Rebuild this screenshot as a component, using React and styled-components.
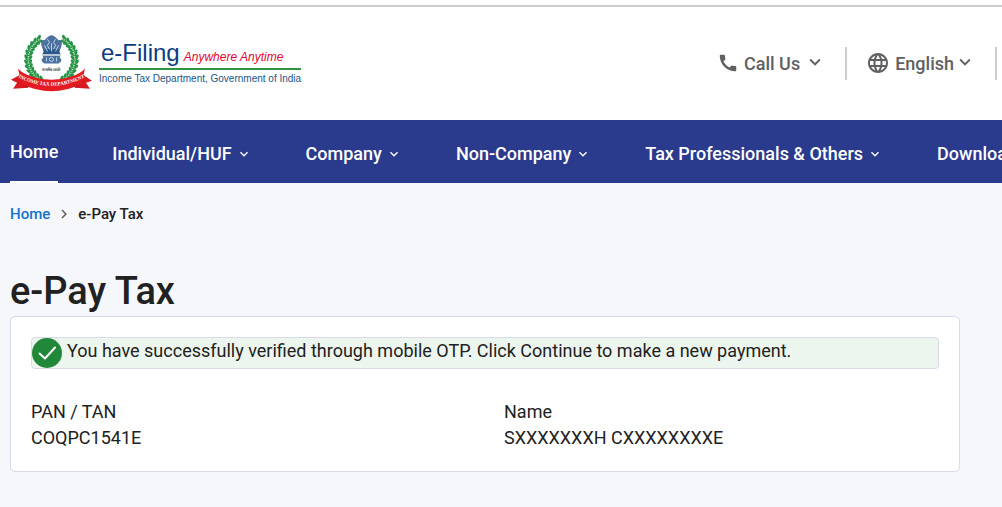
import React from "react";
import styled, { createGlobalStyle } from "styled-components";
import {
  MdCall,
  MdKeyboardArrowDown,
  MdKeyboardArrowRight,
  MdLanguage,
} from "react-icons/md";

const menus = [
  "Individual/HUF",
  "Company",
  "Non-Company",
  "Tax Professionals & Others",
  "Downloads",
];

const leafAngles = [-62, -51, -40, -29, -18, -7, 4, 15, 26, 37, 48, 59];

function Leaves() {
  return leafAngles.map((angle) => (
    <g key={angle} transform={`rotate(${angle} 0 0) translate(23 0)`}>
      <ellipse cx="2" cy="0" rx="1.6" ry="3.4" transform="rotate(36)" />
      <ellipse cx="-2" cy="0" rx="1.5" ry="3.2" transform="rotate(-36)" />
      <circle cx="0" cy="2" r="1" fill="#8cc79a" />
    </g>
  ));
}

function Emblem() {
  return (
    <EmblemSvg viewBox="0 0 82 57" aria-hidden="true">
      <g fill="#269447">
        <g transform="translate(41 25)">
          <Leaves />
        </g>
        <g transform="translate(41 25) scale(-1 1)">
          <Leaves />
        </g>
      </g>

      {/* lion capital */}
      <g fill="#4a719f">
        <path d="M37 3 Q41 -1 45 3 L48 6 Q52 5 51 11 L49 17 H33 L31 11 Q30 5 34 6 Z" />
        <path d="M34 15 H48 L50 20 H32 Z" fill="#2d568b" />
        <path d="M32 21 H50 L49 23 Q53 26 48 29 H34 Q29 26 33 23 Z" />
      </g>
      <g fill="none" stroke="#dbe6f1" strokeWidth="0.8">
        <path d="M37 5 L39 8 L37 11 L39 15 M45 5 L43 8 L45 11 L43 15 M41 9 V17" />
        <path d="M33 20.5 H49 M34 11 L37 17 M48 11 L45 17" />
        <circle cx="41" cy="25" r="2" />
        <path d="M36 23 V27 M46 23 V27" />
      </g>
      <text
        x="41"
        y="36"
        textAnchor="middle"
        fontSize="4"
        fontWeight="700"
        fill="#333"
      >
        सत्यमेव जयते
      </text>

      {/* ribbon */}
      <path
        d="M10 40 L1 45 L7 48 L3 54 L18 53 Z M72 40 L81 46 L75 48 L79 54 L64 53 Z"
        fill="#d71920"
      />
      <path d="M11 48 L18 53 V49 Z M71 48 L64 53 V49 Z" fill="#841015" />
      <path
        d="M8 34 Q12 39 22 42 Q41 48 60 42 Q70 39 74 34 L71 49 Q41 64 11 49 Z"
        fill="#e31b23"
      />
      <path id="ribbonLine" d="M5 41 Q41 61 77 41" fill="none" />
      <text
        fontFamily="Liberation Serif, serif"
        fontSize="5"
        fontWeight="700"
        fill="#fff"
        textAnchor="middle"
      >
        <textPath href="#ribbonLine" startOffset="50%">
          INCOME TAX DEPARTMENT
        </textPath>
      </text>
    </EmblemSvg>
  );
}

function App() {
  return (
    <>
      <GlobalStyle />
      <Header>
        <Brand href="#home">
          <Emblem />
          <BrandText>
            <BrandTop>
              <BrandName>e-Filing</BrandName>
              <Tagline>Anywhere Anytime</Tagline>
            </BrandTop>
            <Department>Income Tax Department, Government of India</Department>
          </BrandText>
        </Brand>
        <Tools>
          <ToolButton type="button">
            <MdCall size={22} />
            Call Us
            <ToolArrow $space="-1px" />
          </ToolButton>
          <Divider />
          <ToolButton type="button">
            <MdLanguage size={24} />
            <span>English</span>
            <ToolArrow $space="-5px" />
          </ToolButton>
          <Divider />
        </Tools>
      </Header>

      <Nav>
        <HomeLink href="#home">Home</HomeLink>
        {menus.map((menu) => (
          <MenuButton type="button" key={menu}>
            {menu}
            <MdKeyboardArrowDown size={16} />
          </MenuButton>
        ))}
      </Nav>

      <Main>
        <Breadcrumb aria-label="Breadcrumb">
          <a href="#home">Home</a>
          <MdKeyboardArrowRight size={18} />
          <span>e-Pay Tax</span>
        </Breadcrumb>

        <Title>e-Pay Tax</Title>

        <Card>
          <Alert role="status">
            <CheckIcon viewBox="0 0 30 30" aria-hidden="true">
              <circle cx="15" cy="15" r="15" fill="#218739" />
              <path
                d="M7.5 15.5 L13 20.5 L23 9.5"
                fill="none"
                stroke="#fff"
                strokeWidth="2"
                strokeLinecap="round"
                strokeLinejoin="round"
              />
            </CheckIcon>
            <AlertText>
              You have successfully verified through mobile OTP. Click Continue
              to make a new payment.
            </AlertText>
          </Alert>

          <Details>
            <div>
              <dt>PAN / TAN</dt>
              <dd>COQPC1541E</dd>
            </div>
            <div>
              <dt>Name</dt>
              <dd>SXXXXXXXH CXXXXXXXXE</dd>
            </div>
          </Details>
        </Card>
      </Main>
    </>
  );
}

const GlobalStyle = createGlobalStyle`
  * {
    box-sizing: border-box;
  }

  body {
    margin: 0;
    background: #f5f7fb;
    color: #212121;
    font-family: Roboto, "Liberation Sans", sans-serif;
    font-size: 18px;
    overflow-x: hidden;
  }

  a {
    text-decoration: none;
  }

  button {
    border: 0;
    padding: 0;
    background: none;
    font: inherit;
    cursor: pointer;
  }

  svg {
    flex-shrink: 0;
  }
`;

const Header = styled.header`
  display: flex;
  justify-content: space-between;
  align-items: center;
  background: linear-gradient(#ccc, #ccc) 0 5px / 100% 2px no-repeat #fff;
  padding: 6px 5px 0 10px;
  height: 120px;
`;

const Brand = styled.a`
  display: flex;
  align-items: center;
  gap: 6px;
`;

const EmblemSvg = styled.svg`
  width: 83px;
  height: 58px;
`;

const BrandText = styled.div`
  font-family: "Liberation Sans", sans-serif;
  white-space: nowrap;
`;

const BrandTop = styled.div`
  display: flex;
  align-items: baseline;
  gap: 4px;
  padding: 0 2px;
  border-bottom: 2px solid #2c9440;
`;

const BrandName = styled.span`
  font-size: 24px;
  line-height: 30px;
  color: #0b3d84;
`;

const Tagline = styled.span`
  font-size: 12px;
  font-style: italic;
  color: #e2062c;
`;

const Department = styled.div`
  font-size: 10px;
  line-height: 18px;
  color: #1c5486;
`;

const Tools = styled.div`
  display: flex;
  align-items: center;
  gap: 19px;
`;

const ToolButton = styled.button`
  display: flex;
  align-items: center;
  gap: 5px;
  color: #616161;
  font-weight: 500;
`;

const ToolArrow = styled(MdKeyboardArrowDown).attrs({ size: 22 })`
  margin-left: ${(props) => props.$space};
  margin-bottom: 2px;
`;

const Divider = styled.span`
  width: 2px;
  height: 33px;
  background: #ccc;
`;

const Nav = styled.nav`
  display: flex;
  gap: 54px;
  height: 63px;
  padding-left: 10px;
  background: #2a3a8c;
  overflow: hidden;
`;

const HomeLink = styled.a`
  display: flex;
  align-items: center;
  padding-top: 2px;
  color: #fff;
  font-weight: 500;
  border-bottom: 2px solid #fff;
`;

const MenuButton = styled.button`
  display: flex;
  align-items: center;
  gap: 4px;
  padding-top: 4px;
  color: #fff;
  font-weight: 500;
  white-space: nowrap;
`;

const Main = styled.main`
  padding: 20px 42px 32px 10px;
`;

const Breadcrumb = styled.nav`
  display: flex;
  align-items: center;
  gap: 5px;
  height: 22px;
  font-size: 15px;
  font-weight: 500;

  a {
    color: #1272ce;
  }

  svg {
    color: #616161;
  }
`;

const Title = styled.h1`
  margin: 43px 0 2px;
  font-size: 38px;
  line-height: 46px;
  font-weight: 500;
`;

const Card = styled.section`
  padding: 20px;
  background: #fff;
  border: 1px solid #d8d9ea;
  border-radius: 5px;
`;

const Alert = styled.div`
  display: flex;
  gap: 5px;
  background: #edf6ee;
  border: 1px solid #d8d9ea;
  border-radius: 4px;
`;

const CheckIcon = styled.svg`
  width: 30px;
  height: 30px;
`;

const AlertText = styled.span`
  line-height: 26px;
`;

const Details = styled.dl`
  display: grid;
  grid-template-columns: 1fr 1fr;
  gap: 38px;
  margin: 30px 0 0;
  line-height: 26px;

  dd {
    margin: 0;
  }
`;

export default App;
